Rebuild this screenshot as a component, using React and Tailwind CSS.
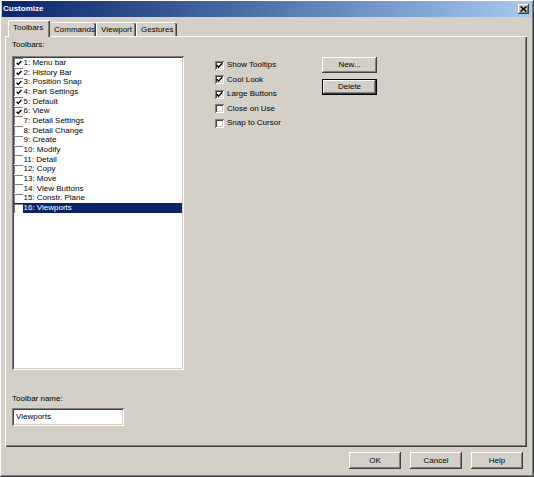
import React from 'react';

const raised = 'shadow-[inset_-1px_-1px_0_#404040,inset_1px_1px_0_#ffffff,inset_-2px_-2px_0_#808080]';
const sunken = 'shadow-[inset_1px_1px_0_#808080,inset_-1px_-1px_0_#ffffff,inset_2px_2px_0_#404040,inset_-2px_-2px_0_#d4d0c8]';

const toolbars = [
  ['1: Menu bar', true],
  ['2: History Bar', true],
  ['3: Position Snap', true],
  ['4: Part Settings', true],
  ['5: Default', true],
  ['6: View', true],
  ['7: Detail Settings', false],
  ['8: Detail Change', false],
  ['9: Create', false],
  ['10: Modify', false],
  ['11: Detail', false],
  ['12: Copy', false],
  ['13: Move', false],
  ['14: View Buttons', false],
  ['15: Constr. Plane', false],
  ['16: Viewports', false],
];

const options = [
  ['Show Tooltips', true],
  ['Cool Look', true],
  ['Large Buttons', true],
  ['Close on Use', false],
  ['Snap to Cursor', false],
];

function Tick() {
  return (
    <svg viewBox="0 0 9 9" className="w-full h-full">
      <path d="M1.8 4.2 L3.6 6.2 L7.2 2.2" fill="none" stroke="#000" strokeWidth="1.5" />
    </svg>
  );
}

function Btn({ children, isDefault }) {
  return (
    <div className={`h-full w-full flex items-center justify-center bg-[#d4d0c8] ${isDefault ? 'border border-black' : ''} ${raised}`}>
      {children}
    </div>
  );
}

export default function App() {
  const selected = 15;
  return (
    <div className={`w-[534px] h-[477px] bg-[#d4d0c8] flex flex-col px-[2px] pb-[2px] pt-[1px] font-['Liberation_Sans',Arial,sans-serif] text-[8px] leading-none text-black shadow-[inset_-1px_-1px_0_#404040,inset_1px_1px_0_#ffffff,inset_-2px_-2px_0_#808080]`}>
      {/* Title bar */}
      <div className="h-[16px] flex items-center justify-between pl-[1px] pr-[3px] bg-gradient-to-r from-[#0a246a] to-[#a6caf0]">
        <span className="text-white font-bold text-[8px]">Customize</span>
        <div className={`w-[11px] h-[10px] bg-[#d4d0c8] flex items-center justify-center ${raised}`}>
          <svg viewBox="0 0 7 6" className="w-[7px] h-[6px]">
            <path d="M0.5 0.5 L6.5 5.5 M6.5 0.5 L0.5 5.5" stroke="#000" strokeWidth="1.6" />
          </svg>
        </div>
      </div>

      {/* Tabs */}
      <div className="mt-[3px] ml-[6px] h-[16px] flex items-end relative z-10">
        <div className="h-[17px] -mb-[1px] px-[4px] pt-[3px] bg-[#d4d0c8] border-t border-l border-white rounded-tl-[2px] shadow-[inset_-1px_0_0_#404040,inset_-2px_0_0_#808080] w-[42px]">
          Toolbars
        </div>
        {['Commands', 'Viewport', 'Gestures'].map((t, i) => (
          <div key={t} className={`h-[14px] pt-[3px] px-[4px] border-t border-white shadow-[inset_-1px_0_0_#404040,inset_-2px_0_0_#808080] rounded-tr-[2px] ${i === 0 ? 'w-[46px]' : i === 1 ? 'w-[40px] border-l' : 'w-[41px] border-l'}`}>
            {t}
          </div>
        ))}
      </div>

      {/* Panel */}
      <div className="ml-[3px] mr-[5px] h-[411px] flex flex-col pl-[7px] pt-[5px] shadow-[inset_1px_1px_0_#ffffff,inset_-1px_-1px_0_#404040,inset_-2px_-2px_0_#808080]">
        <div className="flex">
          <div className="w-[172px] flex flex-col">
            <div className="h-[10px]">Toolbars:</div>
            <div className={`mt-[5px] h-[314px] bg-white p-[2px] ${sunken}`}>
              {toolbars.map(([name, on], i) => (
                <div key={name} className={`h-[9.7px] flex items-center ${i === selected ? 'bg-[#0a246a] text-white' : ''}`}>
                  <div className="w-[9px] h-[9px] bg-white border-l border-t border-[#808080] shrink-0">
                    {on && <Tick />}
                  </div>
                  <span className="pl-[0.5px]">{name}</span>
                </div>
              ))}
            </div>
          </div>

          <div className="ml-[31px] w-[107px] mt-[17px] flex flex-col">
            {options.map(([label, on]) => (
              <div key={label} className="h-[14.5px] flex items-center">
                <div className={`w-[9px] h-[9px] bg-white shrink-0 ${sunken}`}>
                  {on && <Tick />}
                </div>
                <span className="ml-[3px]">{label}</span>
              </div>
            ))}
          </div>

          <div className="mt-[16px] w-[55px] flex flex-col gap-[6px]">
            <div className="h-[16px]"><Btn>New...</Btn></div>
            <div className="h-[16px]"><Btn isDefault>Delete</Btn></div>
          </div>
        </div>

        <div className="mt-[25px] h-[10px]">Toolbar name:</div>
        <div className={`mt-[3px] w-[112px] h-[18px] bg-white flex items-center pl-[4px] ${sunken}`}>
          Viewports
        </div>
      </div>

      {/* Bottom buttons */}
      <div className="flex-1 flex justify-end items-start pt-[5px] pr-[9px] gap-[9px]">
        {['OK', 'Cancel', 'Help'].map(b => (
          <div key={b} className="w-[52px] h-[17px]"><Btn>{b}</Btn></div>
        ))}
      </div>
    </div>
  );
}
